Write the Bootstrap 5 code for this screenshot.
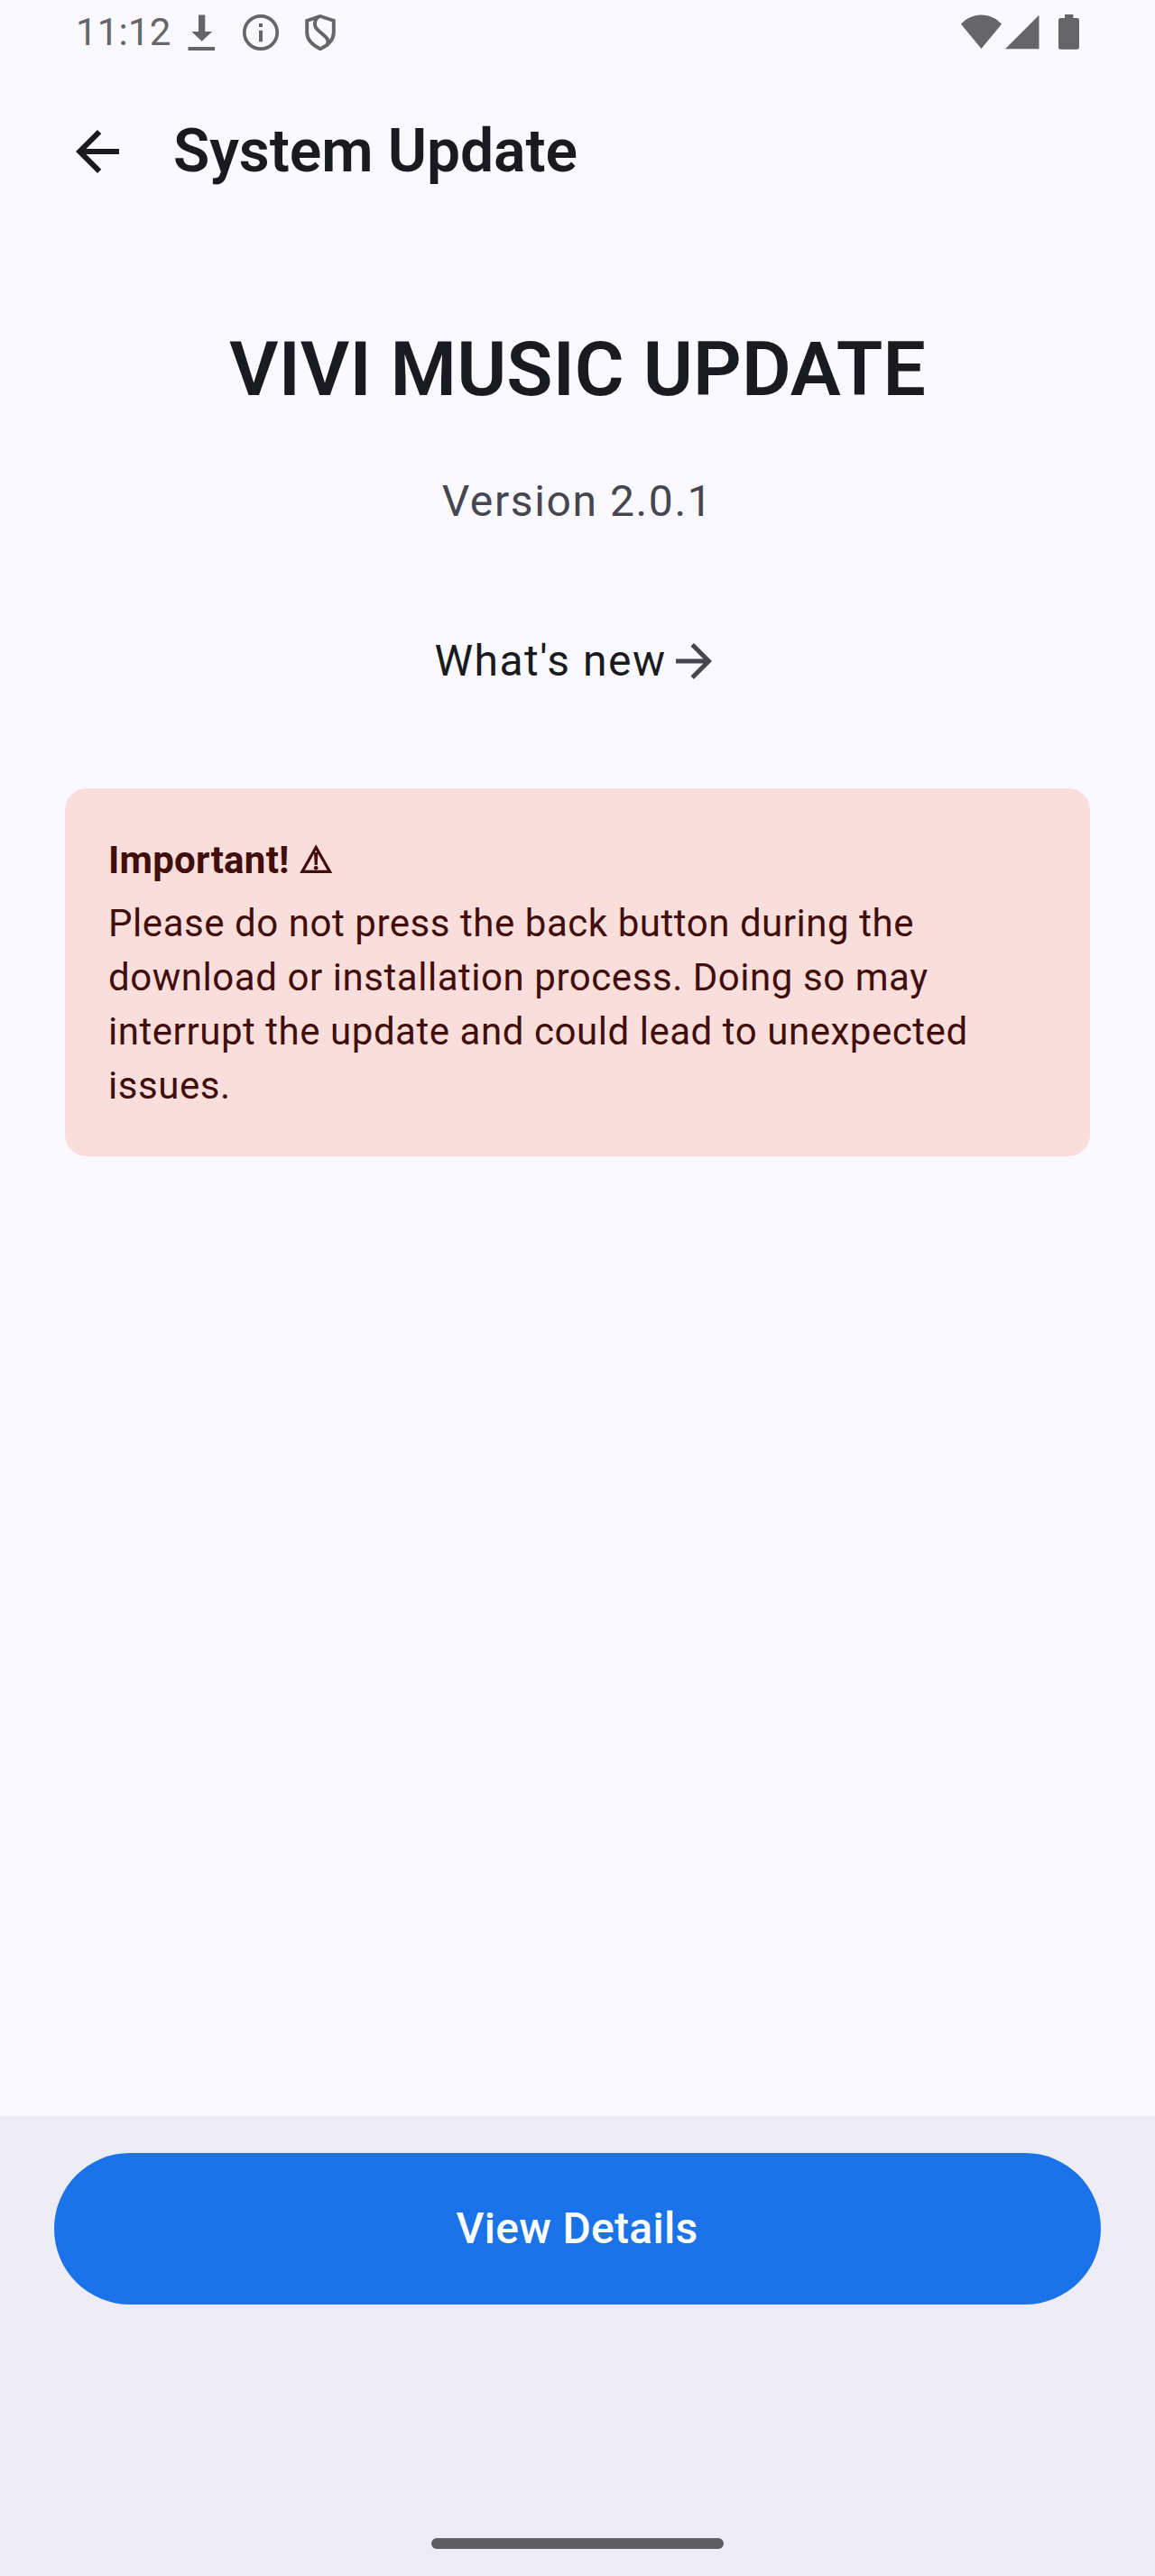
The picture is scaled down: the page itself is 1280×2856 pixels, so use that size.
<!DOCTYPE html>
<html lang="en">
<head>
<meta charset="utf-8">
<meta name="viewport" content="width=device-width, initial-scale=1">
<title>System Update</title>
<link href="https://cdn.jsdelivr.net/npm/bootstrap@5.3.0/dist/css/bootstrap.min.css" rel="stylesheet">
<style>
  body { background: #f9f9ff; color: #1a1b20; font-family: Roboto, "Noto Sans", sans-serif; }
  svg { display: block; flex: none; }
  .screen { height: 2856px; overflow: hidden; }
  .status-bar { height: 72px; padding: 0 82px 0 84px; color: #666668; }
  .clock { font-size: 42px; line-height: 72px; width: 122px; letter-spacing: .2px; }
  .app-bar { height: 192px; padding: 0 72px; }
  .app-title { font-size: 66px; font-weight: 600; line-height: 84px; letter-spacing: -.1px; margin-left: 48px; }
  .content { padding: 92px 72px 0; }
  .headline { font-size: 84px; font-weight: 600; line-height: 108px; letter-spacing: .05px; }
  .version { font-size: 48px; line-height: 72px; letter-spacing: 1.6px; color: #45464f; margin-top: 56px; }
  .whats-new { font-size: 48px; line-height: 72px; letter-spacing: 1.5px; margin-top: 105px; color: #1a1b20; }
  .whats-new svg { color: #45464f; }
  .notice { background: #fadedc; color: #410e0b; border-radius: 24px; margin-top: 105px; padding: 50px 48px 48px; height: 408px; font-size: 42px; line-height: 60px; letter-spacing: .55px; }
  .notice-title { letter-spacing: .25px; gap: 10px; margin-bottom: 10px; }
  .bottom-bar { height: 510px; background: #eeedf6; padding: 41px 60px 30px; }
  .details-btn { height: 168px; background: #1b73e9; color: #fff; font-size: 48px; font-weight: 500; line-height: 72px; letter-spacing: .3px; padding: 0 13px 0 12px; --bs-btn-hover-bg: #1765ce; --bs-btn-hover-color: #fff; }
  .home-handle { width: 324px; height: 12px; background: #5f5f63; }
</style>
</head>
<body>
<div class="screen d-flex flex-column">
  <header>
    <div class="status-bar d-flex align-items-center">
      <span class="clock">11:12</span>
      <svg width="170" height="72" viewBox="206 0 170 72" fill="currentColor">
        <path d="M220 16.500h7.300V35h7.900l-11.500 10.700L212.300 35h7.700zM208.500 52h29.500v4h-29.500z"/>
        <circle cx="289" cy="36" r="18.200" fill="none" stroke="currentColor" stroke-width="3.700"/>
        <path d="M287 26h4v4h-4zM287 33.700h4v12.600h-4z"/>
        <path d="M355 18l14.800 5v13c0 8.500-6 14-14.800 18.200C346.200 50 340.200 44.500 340.200 36V23z" fill="none" stroke="currentColor" stroke-width="3.900"/>
        <path d="M353.500 18c-6 4.500-6 11.500-.5 16l7 6c4 3.400 4.500 7 2 11" fill="none" stroke="currentColor" stroke-width="3.900"/>
      </svg>
      <svg class="ms-auto" width="134" height="72" viewBox="1064 0 134 72" fill="currentColor">
        <path d="M1087.500 54L1065 26.700c6-6.500 14-10.200 22.500-10.200s16.500 3.700 22.500 10.200zM1114 54.200h37.500V16.700zM1180 16h9.300v4h4.500a2.200 2.200 0 0 1 2.200 2.200v30.300a2.200 2.200 0 0 1-2.200 2.200h-18.600a2.200 2.200 0 0 1-2.200-2.200V22.200a2.200 2.200 0 0 1 2.200-2.200h4.800z"/>
      </svg>
    </div>
    <div class="app-bar d-flex align-items-center">
      <svg width="72" height="72" viewBox="0 0 24 24" fill="currentColor" role="img" aria-label="Back"><path d="M20 11H7.830l5.590-5.590L12 4l-8 8 8 8 1.410-1.410L7.830 13H20z"/></svg>
      <h1 class="app-title mb-0">System Update</h1>
    </div>
  </header>
  <main class="content flex-grow-1">
    <h2 class="headline text-center mb-0">VIVI MUSIC UPDATE</h2>
    <p class="version text-center mb-0">Version 2.0.1</p>
    <a href="#" class="whats-new d-flex justify-content-center align-items-center text-decoration-none">What's new<svg width="60" height="60" viewBox="0 0 24 24" fill="currentColor"><path d="M12 4l-1.410 1.410L16.170 11H4v2h12.170l-5.580 5.590L12 20l8-8z"/></svg></a>
    <section class="notice">
      <div class="notice-title d-flex align-items-center fw-bold">Important!
        <svg width="38" height="60" viewBox="331 924 38 60" fill="none" stroke="currentColor"><path d="M350.200 939.500L335 966.300h30.400z" stroke-width="3.300"/><path d="M348 945h4.400l-.7 14h-3z" fill="currentColor" stroke="none"/><circle cx="350.200" cy="962.200" r="2.300" fill="currentColor" stroke="none"/></svg>
      </div>
      <p class="mb-0">Please do not press the back button during the download or installation process. Doing so may interrupt the update and could lead to unexpected issues.</p>
    </section>
  </main>
  <footer class="bottom-bar d-flex flex-column align-items-center justify-content-between">
    <button type="button" class="details-btn btn rounded-pill border-0 w-100">View Details</button>
    <div class="home-handle rounded-pill"></div>
  </footer>
</div>
<script src="https://cdn.jsdelivr.net/npm/bootstrap@5.3.0/dist/js/bootstrap.bundle.min.js"></script>
</body>
</html>
